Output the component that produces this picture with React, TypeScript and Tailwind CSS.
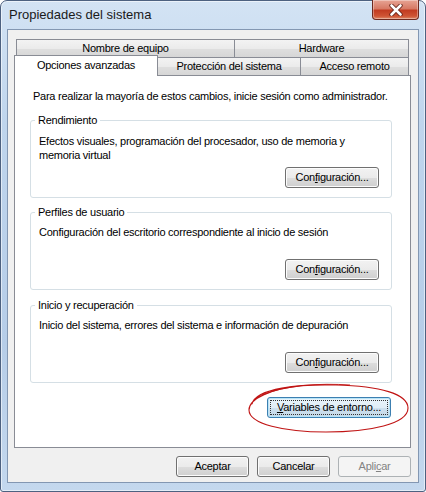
import React from "react";

function Btn({
  children,
  className = "",
  disabled = false,
  focused = false,
}: {
  children: React.ReactNode;
  className?: string;
  disabled?: boolean;
  focused?: boolean;
}) {
  if (disabled) {
    return (
      <div
        className={`h-[21px] flex items-center justify-center rounded-[3px] border border-[#adb2b5] bg-[#f4f4f4] text-[#838383] ${className}`}
      >
        {children}
      </div>
    );
  }
  if (focused) {
    return (
      <div
        className={`h-[21px] flex items-center justify-center rounded-[3px] border border-[#3c7fb1] bg-[linear-gradient(180deg,#eaf4fb_0%,#e0edf6_50%,#cfe1ee_51%,#c3d8e8_100%)] shadow-[inset_0_0_0_1px_#b8e4f7] p-[2px] ${className}`}
      >
        <div className="w-full h-full flex items-center justify-center border border-dotted border-[#333]">
          {children}
        </div>
      </div>
    );
  }
  return (
    <div
      className={`h-[21px] flex items-center justify-center rounded-[3px] border border-[#707070] bg-[linear-gradient(180deg,#f2f2f2_0%,#ebebeb_50%,#dddddd_51%,#cfcfcf_100%)] shadow-[inset_0_0_0_1px_#fcfcfc] ${className}`}
    >
      {children}
    </div>
  );
}

function GroupBox({
  label,
  children,
  className = "",
}: {
  label: string;
  children: React.ReactNode;
  className?: string;
}) {
  return (
    <div
      className={`relative ml-[15px] w-[362px] h-[78px] rounded-[3px] border border-[#d5dfe5] flex flex-col ${className}`}
    >
      <span className="absolute -top-[8px] left-[4px] px-[3px] bg-white leading-[15px]">
        {label}
      </span>
      {children}
    </div>
  );
}

function Configuracion() {
  return (
    <Btn className="w-[94px] self-end mr-[12px] mt-auto mb-[9px]">
      <span>
        Con<span className="underline">f</span>iguración...
      </span>
    </Btn>
  );
}

const tabBase =
  "flex items-center justify-center border-t border-l border-r border-[#898c95] bg-[linear-gradient(180deg,#f3f3f3_0%,#ebebeb_50%,#dfdfdf_51%,#d6d6d6_100%)]";

export default function App() {
  return (
    <div className="relative w-[426px] h-[492px] overflow-hidden bg-white font-['Liberation_Sans',Arial,sans-serif] text-[11px] tracking-[-0.25px] text-black">
      <div className="flex flex-col w-full h-full rounded-t-[7px] rounded-b-[3px] border border-[#4d6180] bg-[linear-gradient(180deg,#d3e3f4_0%,#bfd5ed_25%,#b6cde8_70%,#c4d8ee_100%)] shadow-[inset_0_0_0_1px_rgba(255,255,255,0.55)]">
        {/* Title bar */}
        <div className="h-[28px] flex items-start justify-between">
          <div className="pl-[8px] pt-[6px] text-[13px] leading-[16px] tracking-normal text-[#1a1a1a]">
            Propiedades del sistema
          </div>
          <div className="-mt-px mr-[6px] w-[47px] h-[20px] rounded-b-[4px] border border-t-0 border-[#6e2a20] bg-[linear-gradient(180deg,#e7a494_0%,#d77a65_45%,#c23c22_55%,#cf5535_85%,#de8a6a_100%)] shadow-[inset_0_0_0_1px_rgba(255,255,255,0.35)] flex items-center justify-center">
            <svg width="14" height="12" viewBox="0 0 14 12">
              <path
                d="M2.5 1.5 L11.5 10.5 M11.5 1.5 L2.5 10.5"
                stroke="#5a1a10"
                strokeWidth="4.2"
                strokeLinecap="round"
              />
              <path
                d="M2.5 1.5 L11.5 10.5 M11.5 1.5 L2.5 10.5"
                stroke="#ffffff"
                strokeWidth="2.6"
                strokeLinecap="round"
              />
            </svg>
          </div>
        </div>

        {/* Client area */}
        <div className="mx-[6px] h-[454px] border border-[#8397b2] bg-[#f0f0f0] flex flex-col pl-[6px] pr-[6px] pt-[9px]">
          {/* Tab row 1 */}
          <div className="flex h-[18px] ml-[2px]">
            <div className={`${tabBase} w-[219px] h-[18px]`}>Nombre de equipo</div>
            <div className={`${tabBase} w-[175px] h-[18px] -ml-px`}>Hardware</div>
          </div>
          {/* Tab row 2 */}
          <div className="flex items-start h-[18px]">
            <div className="relative z-10 -mt-[2px] w-[144px] h-[21px] flex items-center justify-center border-t border-l border-r border-[#898c95] bg-white pb-[1px]">
              Opciones avanzadas
            </div>
            <div className={`${tabBase} w-[144px] h-[18px] -ml-px`}>Protección del sistema</div>
            <div className={`${tabBase} w-[109px] h-[18px] -ml-px`}>Acceso remoto</div>
          </div>

          {/* Tab panel */}
          <div className="w-[397px] h-[373px] border border-[#898c95] bg-white flex flex-col pt-[13px]">
            <p className="ml-[18px] leading-[15px]">
              Para realizar la mayoría de estos cambios, inicie sesión como administrador.
            </p>

            <GroupBox label="Rendimiento" className="mt-[16px]">
              <p className="ml-[8px] pt-[13px] leading-[14px]">
                Efectos visuales, programación del procesador, uso de memoria y
                <br />
                memoria virtual
              </p>
              <Configuracion />
            </GroupBox>

            <GroupBox label="Perfiles de usuario" className="mt-[14px]">
              <p className="ml-[8px] pt-[12px] leading-[14px]">
                Configuración del escritorio correspondiente al inicio de sesión
              </p>
              <Configuracion />
            </GroupBox>

            <GroupBox label="Inicio y recuperación" className="mt-[15px]">
              <p className="ml-[8px] pt-[12px] leading-[14px]">
                Inicio del sistema, errores del sistema e información de depuración
              </p>
              <Configuracion />
            </GroupBox>

            <Btn focused className="w-[124px] self-end mr-[19px] mt-[14px]">
              <span>
                <span className="underline">V</span>ariables de entorno...
              </span>
            </Btn>
          </div>

          {/* Bottom buttons */}
          <div className="flex justify-end gap-[8px] mt-[8px] pr-[1px]">
            <Btn className="w-[73px]">Aceptar</Btn>
            <Btn className="w-[73px]">Cancelar</Btn>
            <Btn disabled className="w-[73px]">
              <span>
                Apli<span className="underline">c</span>ar
              </span>
            </Btn>
          </div>
        </div>
      </div>

      {/* Red hand-drawn annotation ellipse */}
      <svg
        className="absolute left-0 top-0 pointer-events-none"
        width="426"
        height="492"
        viewBox="0 0 426 492"
      >
        <path
          d="M252 404 C 256 388, 300 384, 336 385 C 380 386, 408 394, 408 408 C 408 424, 370 432, 326 432 C 284 432, 249 424, 249 410 C 249 398, 272 389, 300 386"
          fill="none"
          stroke="#c01414"
          strokeWidth="1.1"
        />
        <path
          d="M262 395 C 285 385, 320 383, 350 385"
          fill="none"
          stroke="#c01414"
          strokeWidth="0.9"
        />
      </svg>
    </div>
  );
}
